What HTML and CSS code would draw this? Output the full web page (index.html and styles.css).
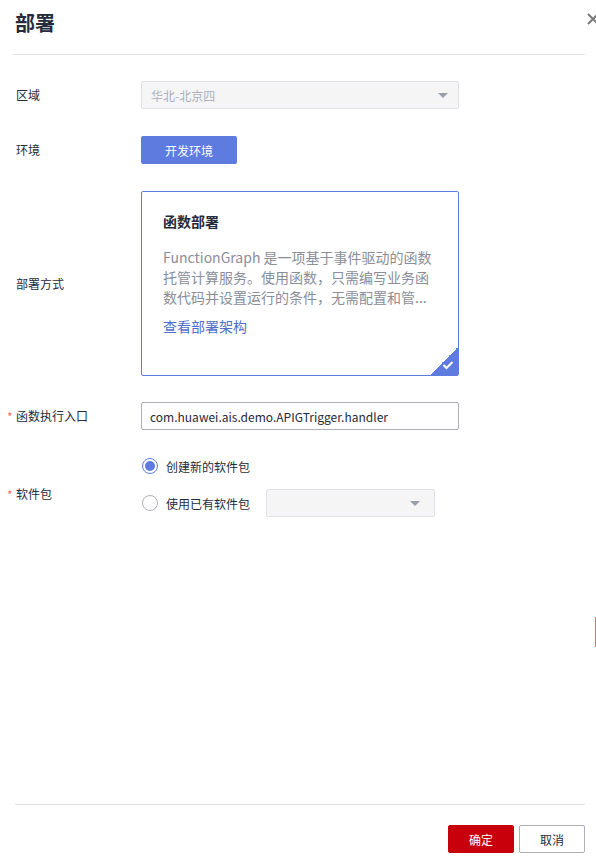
FILE: index.html
```html
<!DOCTYPE html>
<html lang="zh">
<head>
<meta charset="utf-8">
<link rel="stylesheet" href="styles.css">
</head>
<body>
<div class="drawer">
  <div class="header">
    <h1 class="title">部署</h1>
    <span class="close">
      <svg width="12" height="12" viewBox="0 0 12 12"><path d="M1 1 L11 11 M11 1 L1 11" stroke="#7a7a7a" stroke-width="2" fill="none"/></svg>
    </span>
  </div>
  <div class="form">
    <div class="row">
      <div class="label">区域</div>
      <div class="field">
        <div class="select disabled wide">
          <span>华北-北京四</span>
          <span class="caret"></span>
        </div>
      </div>
    </div>
    <div class="row">
      <div class="label">环境</div>
      <div class="field">
        <div class="env-btn">开发环境</div>
      </div>
    </div>
    <div class="row row-card">
      <div class="label">部署方式</div>
      <div class="field">
        <div class="card">
          <div class="card-title">函数部署</div>
          <div class="card-desc">FunctionGraph 是一项基于事件驱动的函数托管计算服务。使用函数，只需编写业务函数代码并设置运行的条件，无需配置和管...</div>
          <div class="card-link">查看部署架构</div>
          <div class="corner">
            <svg width="12" height="10" viewBox="0 0 12 10"><path d="M1.5 5 L4.5 8 L10.5 2" stroke="#fff" stroke-width="2" fill="none"/></svg>
          </div>
        </div>
      </div>
    </div>
    <div class="row">
      <div class="label"><span class="req">*</span>函数执行入口</div>
      <div class="field">
        <div class="input wide">com.huawei.ais.demo.APIGTrigger.handler</div>
      </div>
    </div>
    <div class="row row-pkg">
      <div class="label label-pkg"><span class="req">*</span>软件包</div>
      <div class="field radios">
        <div class="radio-line">
          <span class="radio checked"></span>
          <span class="radio-text">创建新的软件包</span>
        </div>
        <div class="radio-line">
          <span class="radio"></span>
          <span class="radio-text">使用已有软件包</span>
          <div class="select disabled small"><span></span><span class="caret"></span></div>
        </div>
      </div>
    </div>
  </div>
  <div class="footer">
    <div class="btn primary">确定</div>
    <div class="btn">取消</div>
  </div>
  <div class="scroll-mark"></div>
</div>
</body>
</html>
```
FILE: styles.css
```css
html, body {
  margin: 0;
  padding: 0;
  background: #fff;
}
body {
  font-family: "Noto Sans CJK SC", "Noto Sans", sans-serif;
  font-size: 12px;
  color: #252b3a;
  width: 596px;
  height: 858px;
  overflow: hidden;
}
.drawer {
  position: relative;
  width: 596px;
  height: 858px;
  display: flex;
  flex-direction: column;
}
.header {
  margin: 0 11px 0 13px;
  height: 55px;
  border-bottom: 1px solid #dfe1e6;
  display: flex;
  align-items: flex-start;
  box-sizing: border-box;
}
.title {
  margin: 9px 0 0 2px;
  font-size: 20px;
  line-height: 28px;
  font-weight: 700;
  color: #252b3a;
}
.close {
  position: absolute;
  left: 587px;
  top: 13px;
  width: 12px;
  height: 12px;
  display: block;
}
.close svg { display: block; }
.form {
  flex: 1;
  padding: 26px 0 0 16px;
}
.row {
  display: flex;
  align-items: center;
  margin-bottom: 27px;
}
.row-card {
  margin-bottom: 26px;
}
.row-pkg {
  margin-top: -5px;
}
.label {
  width: 125px;
  position: relative;
  font-size: 12px;
  color: #252b3a;
  line-height: 20px;
}
.label-pkg {
  margin-top: 18px;
}
.req {
  position: absolute;
  left: -9px;
  top: 1px;
  color: #f66f6a;
  font-size: 12px;
}
.field {
  display: flex;
}
.wide { width: 318px; }
.select {
  height: 28px;
  box-sizing: border-box;
  border: 1px solid #dfe1e6;
  border-radius: 2px;
  display: flex;
  align-items: center;
  justify-content: space-between;
  padding: 0 10px 0 9px;
  font-size: 12px;
}
.select.disabled {
  background: #f5f5f6;
  color: #adb0b8;
}
.caret {
  width: 0;
  height: 0;
  border-left: 5px solid transparent;
  border-right: 5px solid transparent;
  border-top: 5px solid #9a9ea8;
}
.select.small {
  width: 169px;
  margin-left: 16px;
  padding-right: 14px;
}
.env-btn {
  width: 96px;
  height: 28px;
  background: #5e7ce0;
  color: #fff;
  border-radius: 2px;
  display: flex;
  align-items: center;
  justify-content: center;
  font-size: 12px;
}
.card {
  position: relative;
  width: 318px;
  height: 185px;
  box-sizing: border-box;
  border: 1px solid #5e7ce0;
  border-radius: 2px;
  padding: 19px 24px 0 21px;
  overflow: hidden;
}
.card-title {
  font-size: 14px;
  font-weight: 700;
  line-height: 20px;
  color: #252b3a;
}
.card-desc {
  margin-top: 16px;
  font-size: 14px;
  line-height: 20px;
  color: #8a8e99;
}
.card-link {
  margin-top: 9px;
  font-size: 14px;
  line-height: 20px;
  color: #526ecc;
}
.corner {
  position: absolute;
  right: 0;
  bottom: 0;
  width: 28px;
  height: 28px;
  background: linear-gradient(135deg, transparent 50%, #5e7ce0 50%);
}
.corner svg {
  position: absolute;
  right: 4px;
  bottom: 5px;
}
.input {
  height: 28px;
  box-sizing: border-box;
  border: 1px solid #adb0b8;
  border-radius: 2px;
  padding: 0 8px;
  display: flex;
  align-items: center;
  font-size: 12px;
  color: #252b3a;
}
.radios {
  flex-direction: column;
  gap: 9px;
}
.radio-line {
  display: flex;
  align-items: center;
  height: 28px;
}
.radio {
  width: 16px;
  height: 16px;
  box-sizing: border-box;
  border: 1px solid #adb0b8;
  border-radius: 50%;
  margin-left: 1px;
  margin-right: 8px;
  position: relative;
  background: #fff;
}
.radio.checked {
  border-color: #5e7ce0;
}
.radio.checked::after {
  content: "";
  position: absolute;
  left: 2px;
  top: 2px;
  width: 10px;
  height: 10px;
  border-radius: 50%;
  background: #5e7ce0;
}
.radio-text {
  font-size: 12px;
  color: #252b3a;
}
.footer {
  margin: 0 11px 0 15px;
  border-top: 1px solid #dfe1e6;
  height: 54px;
  box-sizing: border-box;
  display: flex;
  justify-content: flex-end;
  align-items: flex-start;
  padding-top: 20px;
  gap: 5px;
}
.btn {
  width: 66px;
  height: 28px;
  box-sizing: border-box;
  border: 1px solid #adb0b8;
  border-radius: 2px;
  display: flex;
  align-items: center;
  justify-content: center;
  font-size: 12px;
  color: #252b3a;
  background: #fff;
}
.btn.primary {
  background: #c7000b;
  border-color: #c7000b;
  color: #fff;
}
.scroll-mark {
  position: absolute;
  left: 595px;
  top: 617px;
  width: 1px;
  height: 30px;
  background: #e06c6c;
}
```
